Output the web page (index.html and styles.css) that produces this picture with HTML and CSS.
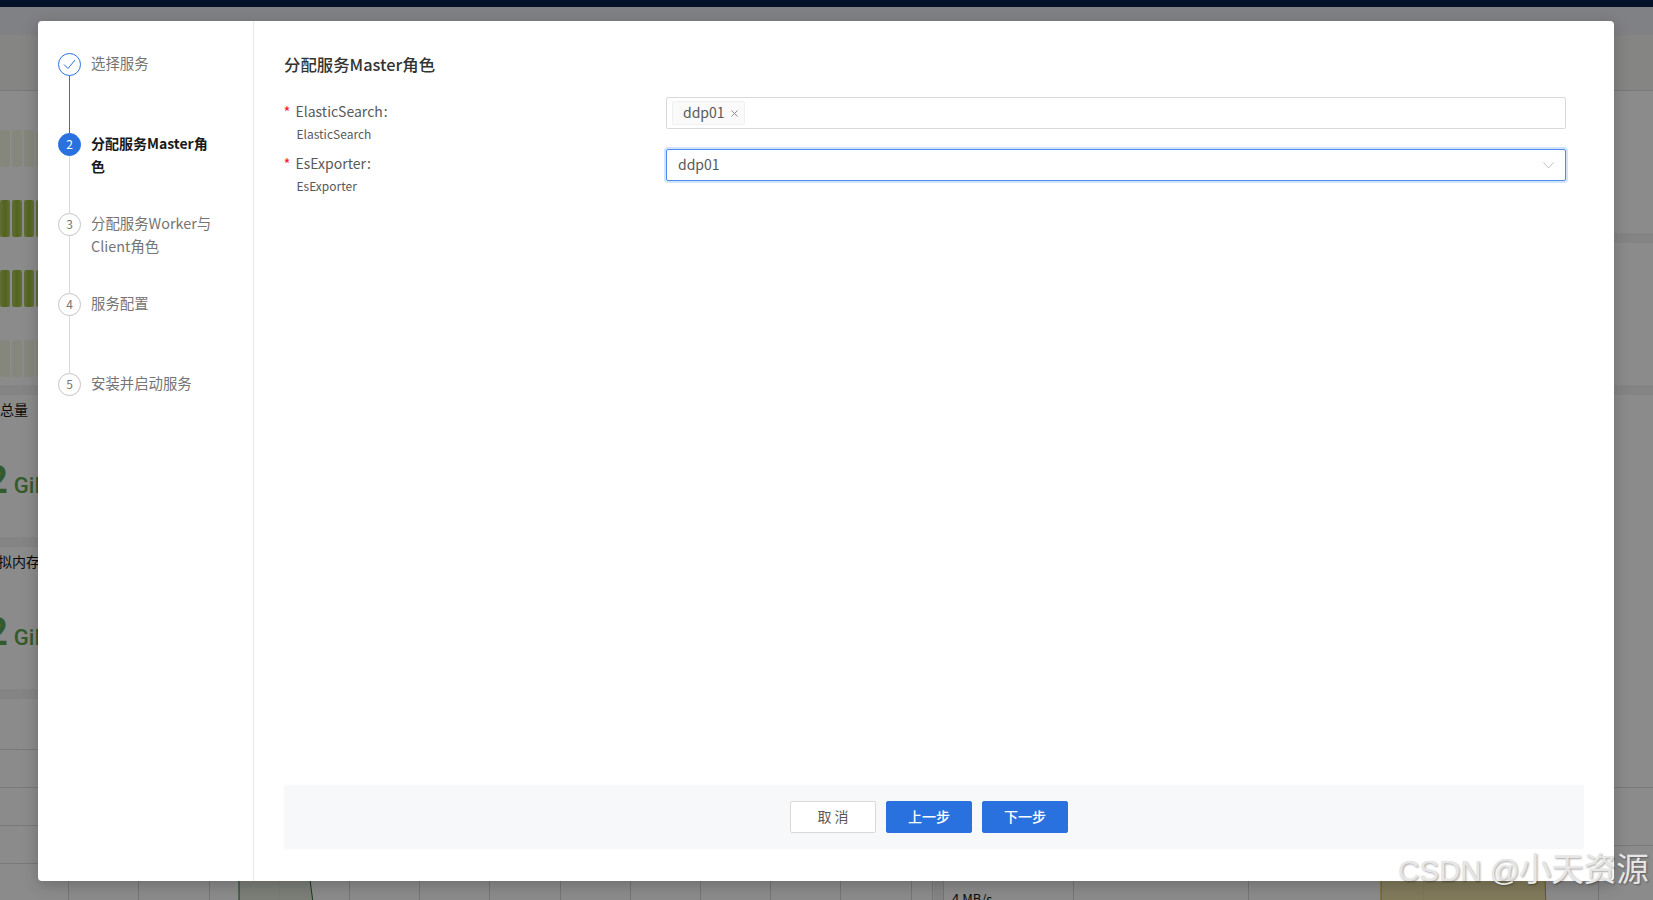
FILE: index.html
```html
<!DOCTYPE html>
<html lang="zh-CN">
<head>
<meta charset="utf-8">
<title>分配服务Master角色</title>
<link rel="stylesheet" href="styles.css">
</head>
<body>
<div class="dash">
  <div class="topbar"></div>
  <div class="toolbar"></div>
  <div class="columns">
    <div class="col col-left">
      <div class="panel gauges">
        <div class="gauge faded"><i></i><i></i><i></i><i></i></div>
        <div class="gauge"><i></i><i></i><i></i><i></i></div>
        <div class="gauge"><i></i><i></i><i></i><i></i></div>
        <div class="gauge faded"><i></i><i></i><i></i><i></i></div>
      </div>
      <div class="panel stat">
        <div class="stat-title">总量</div>
        <div class="stat-value"><b>2</b>GiB</div>
      </div>
      <div class="panel stat stat-second">
        <div class="stat-title">拟内存</div>
        <div class="stat-value"><b>2</b>GiB</div>
      </div>
      <div class="panel chart chart-left">
        <svg class="area area-green" width="80" height="30" viewBox="0 0 80 30"><path d="M2 30 L2 0 L73 0 L77 30 Z"/></svg>
      </div>
    </div>
    <div class="col col-right">
      <div class="panel stat-r"></div>
      <div class="panel stat-r"></div>
      <div class="panel chart chart-right">
        <svg class="area area-yellow" width="170" height="30" viewBox="0 0 170 30"><path d="M2 30 L2 0 L166 0 L167 30 Z"/></svg>
        <span class="axis">4 MB/s</span>
      </div>
    </div>
  </div>
</div>

<div class="mask">
  <div class="modal">
    <aside class="steps">
      <div class="step done">
        <span class="dot"><svg width="13" height="11" viewBox="0 0 13 11"><path d="M1 5.5 L5 9.5 L12 1" fill="none" stroke="#2a71e0" stroke-width="1"/></svg></span>
        <span class="step-text">选择服务</span>
      </div>
      <div class="step active">
        <span class="dot">2</span>
        <span class="step-text">分配服务Master角色</span>
      </div>
      <div class="step">
        <span class="dot">3</span>
        <span class="step-text">分配服务Worker与Client角色</span>
      </div>
      <div class="step">
        <span class="dot">4</span>
        <span class="step-text">服务配置</span>
      </div>
      <div class="step last">
        <span class="dot">5</span>
        <span class="step-text">安装并启动服务</span>
      </div>
    </aside>
    <section class="content">
      <h2 class="title">分配服务Master角色</h2>
      <div class="form">
        <div class="form-item">
          <div class="label">
            <div class="label-main"><span class="req">*</span>ElasticSearch<span class="colon">:</span></div>
            <div class="label-sub">ElasticSearch</div>
          </div>
          <div class="control">
            <span class="tag">ddp01<svg class="tag-x" width="7" height="7" viewBox="0 0 7 7"><path d="M.5 .5 L6.5 6.5 M6.5 .5 L.5 6.5" stroke="#8c8c8c" fill="none"/></svg></span>
          </div>
        </div>
        <div class="form-item">
          <div class="label">
            <div class="label-main"><span class="req">*</span>EsExporter<span class="colon">:</span></div>
            <div class="label-sub">EsExporter</div>
          </div>
          <div class="control focus">
            <span class="value">ddp01</span>
            <svg class="chev" width="11" height="7" viewBox="0 0 11 7"><path d="M.5 .5 L5.5 6 L10.5 .5" stroke="#bfbfbf" fill="none"/></svg>
          </div>
        </div>
      </div>
      <div class="footer">
        <button class="btn">取 消</button>
        <button class="btn primary">上一步</button>
        <button class="btn primary">下一步</button>
      </div>
    </section>
  </div>
</div>
<div class="watermark"><span class="wm-latin">CSDN @</span>小天资源</div>
</body>
</html>
```
FILE: styles.css
```css
* { box-sizing: border-box; }
html, body { margin: 0; height: 100%; }
body {
  width: 1653px;
  height: 900px;
  overflow: hidden;
  position: relative;
  font-family: "Noto Sans CJK SC", "Noto Sans", sans-serif;
  font-size: 14px;
  color: #595959;
  background: #fff;
}

/* dashboard behind the dialog */
.dash { height: 900px; display: flex; flex-direction: column; background: #eff1ef; overflow: hidden; }
.topbar { height: 7px; background: #031228; flex: none; }
.toolbar { height: 28px; background: #e9ebf0; flex: none; }
.columns { flex: 1; display: flex; gap: 9px; min-height: 0; }
.col { display: flex; flex-direction: column; }
.col-left { width: 934px; gap: 10px; }
.col-right { width: 710px; gap: 10px; }
.panel { background: #fdfdfd; }
.gauges {
  height: 350px;
  padding-top: 95px;
  display: flex;
  flex-direction: column;
  gap: 33px;
  background: linear-gradient(#f2f4f0 55px, #d9dbd9 55px, #d9dbd9 56px, #fdfdfd 56px);
}
.gauge { display: flex; gap: 2px; height: 37px; }
.gauge i { width: 10px; border-radius: 2px; background: linear-gradient(90deg, #b2c86c, #96b830 50%, #b2c86c); }
.gauge.faded i { background: #f3f6e4; }
.stat { height: 142px; padding-top: 3px; position: relative; }
.stat-second { height: 142px; }
.stat-title { color: #111; font-size: 14px; line-height: 22px; white-space: nowrap; }
.stat-second .stat-title { margin-left: -2px; }
.stat-value {
  font-family: Roboto, sans-serif;
  font-weight: 500;
  color: #5ea654;
  font-size: 22px;
  line-height: 40px;
  margin: 40px 0 0 -14px;
  white-space: nowrap;
}
.stat-value b { font-size: 38px; font-weight: 700; margin-right: 6px; }
.stat-r { height: 142px; }
.col-right .stat-r:first-child {
  height: 198px;
  background: linear-gradient(#f2f4f0 55px, #d9dbd9 55px, #d9dbd9 56px, #fdfdfd 56px);
}
.chart { flex: 1; position: relative; }
.chart-left {
  background:
    linear-gradient(#dcdcdc, #dcdcdc) 0 50px / 100% 1px no-repeat,
    linear-gradient(#dcdcdc, #dcdcdc) 0 88px / 100% 1px no-repeat,
    linear-gradient(#dcdcdc, #dcdcdc) 0 126px / 100% 1px no-repeat,
    linear-gradient(#dcdcdc, #dcdcdc) 0 164px / 100% 1px no-repeat,
    repeating-linear-gradient(90deg, #d6d6d6 0 1px, transparent 1px 70.2px) -2px 0,
    #fdfdfd;
}
.chart-right {
  border-left: 1px solid #d6d6d6;
  background:
    linear-gradient(#dcdcdc, #dcdcdc) 0 392px / 100% 1px no-repeat,
    linear-gradient(#dcdcdc, #dcdcdc) 0 450px / 100% 1px no-repeat,
    repeating-linear-gradient(90deg, transparent 0 129px, #d6d6d6 129px 130px, transparent 130px 175px) 0 0,
    #fdfdfd;
}
.area { position: absolute; left: 237px; top: 181px; }
.area path { stroke-width: 1; }
.area-green path { fill: rgba(218, 228, 212, .85); stroke: #2f6b2f; }
.area-yellow { left: 435px; top: 483px; }
.area-yellow path { fill: rgba(232, 216, 150, .85); stroke: #c9a400; }
.axis { position: absolute; left: 8px; top: 494px; font-size: 13px; color: #111; }

.mask {
  position: absolute;
  inset: 7px 0 0 0;
  background: rgba(0, 0, 0, .45);
}

/* dialog */
.modal {
  position: absolute;
  left: 38px;
  top: 14px;
  width: 1576px;
  height: 860px;
  background: #fff;
  border-radius: 4px;
  box-shadow: 0 4px 16px rgba(0, 0, 0, .22);
  display: flex;
}
.steps {
  width: 216px;
  flex: none;
  border-right: 1px solid #e8e8e8;
  padding: 32px 0 0 20px;
}
.step { height: 80px; display: flex; gap: 10px; position: relative; color: #757575; }
.step::after {
  content: "";
  position: absolute;
  left: 11px;
  top: 23px;
  bottom: 0;
  width: 1px;
  background: #d9d9d9;
}
.step.last::after { display: none; }
.step.done::after { background: #2a71e0; }
.dot {
  width: 23px;
  height: 23px;
  flex: none;
  border-radius: 50%;
  border: 1px solid #c4c4c4;
  display: flex;
  align-items: center;
  justify-content: center;
  padding-bottom: 1px;
  font-size: 12px;
  line-height: 1;
  color: #757575;
}
.step.done .dot { border-color: #2a71e0; padding-bottom: 0; }
.step.active .dot { background: #2a71e0; border-color: #2a71e0; color: #fff; }
.step-text { width: 126px; font-size: 14.4px; line-height: 23px; margin-top: -2px; word-break: break-all; }
.step.active .step-text { color: #1a1a1a; font-size: 14px; font-weight: 700; margin-top: -1px; }

.content { flex: 1; min-width: 0; padding: 30px 30px 32px; display: flex; flex-direction: column; }
.title { margin: 0; font-size: 16.4px; line-height: 26px; font-weight: 500; color: #333; }
.form { flex: 1; padding-top: 20px; }
.form-item { display: grid; grid-template-columns: 382px 900px; height: 52px; }
.label-main { line-height: 22px; padding-top: 3px; height: 24px; color: #595959; white-space: nowrap; display: flex; }
.req { width: 11.5px; color: #f5222d; font-size: 15px; line-height: 24px; margin-left: -.5px; margin-right: .5px; }
.colon { margin-left: 1px; }
.label-sub { font-size: 12px; line-height: 20px; margin: 3px 0 0 12.5px; color: #595959; }
.control {
  height: 32px;
  border: 1px solid #d9d9d9;
  border-radius: 2px;
  padding: 0 4px 0 5px;
  display: flex;
  align-items: center;
  position: relative;
}
.tag {
  height: 24px;
  padding: 0 6px 2px 10px;
  background: #fafafa;
  border: 1px solid #f0f0f0;
  border-radius: 2px;
  display: inline-flex;
  align-items: center;
  gap: 6px;
  line-height: 20px;
}
.tag-x { margin-top: 2px; }
.control.focus {
  border-color: #4a8cf0;
  box-shadow: 0 0 0 2px rgba(42, 113, 224, .2);
  padding: 0 4px 2px 11px;
}
.chev { position: absolute; right: 11px; top: 12px; }

.footer {
  height: 64px;
  flex: none;
  background: #f7f8fa;
  display: flex;
  align-items: center;
  justify-content: center;
  gap: 10px;
  padding-right: 10px;
}
.btn {
  width: 86px;
  height: 32px;
  font: inherit;
  color: #595959;
  background: #fff;
  border: 1px solid #d9d9d9;
  border-radius: 2px;
  padding: 0 0 2px;
}
.btn.primary { background: #2a71e0; border-color: #2a71e0; color: #fff; font-weight: 500; }

.watermark {
  position: absolute;
  left: 1398px;
  top: 844px;
  font-size: 32.5px;
  line-height: 46px;
  white-space: nowrap;
  color: #e6e6e6;
  text-shadow: 1px 1px 2px rgba(0, 0, 0, .35);
}
.wm-latin { font-family: "Liberation Sans", sans-serif; font-size: 29.5px; margin-right: -1px; }
```
